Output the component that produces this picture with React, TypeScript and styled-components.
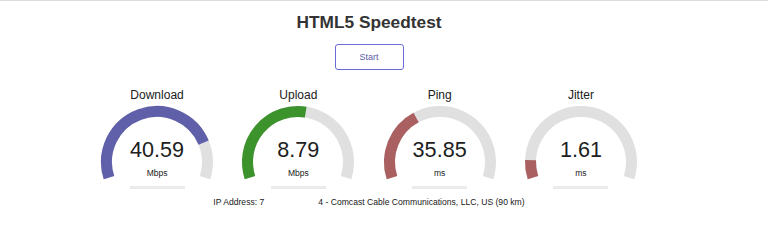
import React from "react";
import styled, { createGlobalStyle } from "styled-components";

const Global = createGlobalStyle`
  html, body { margin: 0; padding: 0; background: #fff; }
  body { font-family: "Liberation Sans", Arial, Helvetica, sans-serif; color: #202020; }
`;

const Frame = styled.div`
  border-top: 1px solid #dcdcdc;
  width: 768px;
  height: 231px;
  overflow: hidden;
`;

const Page = styled.main`
  width: 738px;
  display: flex;
  flex-direction: column;
  align-items: center;
`;

const Title = styled.h1`
  margin: 11px 0 0;
  font-size: 17.3px;
  line-height: 20px;
  font-weight: 700;
  color: #333;
`;

const StartButton = styled.button`
  margin-top: 12px;
  width: 69px;
  height: 26px;
  box-sizing: border-box;
  border: 1.4px solid #6a6ad8;
  border-radius: 3px;
  background: #fff;
  color: #6060aa;
  font-family: "Liberation Sans", Arial, sans-serif;
  font-size: 9px;
  padding: 0;
  cursor: pointer;
`;

const GaugeRow = styled.section`
  margin-top: 18px;
  display: grid;
  grid-template-columns: repeat(4, 141.3px);
`;

const Gauge = styled.div`
  display: flex;
  flex-direction: column;
  align-items: center;
`;

const Label = styled.div`
  font-size: 12px;
  line-height: 14px;
  color: #202020;
`;

const Meter = styled.div`
  position: relative;
  margin-top: 2px;
  width: 124px;
  height: 80px;
  display: flex;
  flex-direction: column;
  align-items: center;
`;

const Dial = styled.svg`
  position: absolute;
  inset: 0;
`;

const Value = styled.div`
  position: relative;
  margin-top: 34px;
  font-size: 21.6px;
  line-height: 24px;
  color: #202020;
`;

const Unit = styled.div`
  position: relative;
  margin-top: 6px;
  font-size: 8.5px;
  line-height: 10px;
  color: #202020;
`;

const Progress = styled.div`
  margin-top: 2px;
  width: 55px;
  height: 2.5px;
  background: #ebebeb;
`;

const IpLine = styled.p`
  margin: 7.5px 0 0;
  font-size: 8.6px;
  line-height: 12px;
  color: #202020;
  white-space: nowrap;
`;

const Redacted = styled.span`
  display: inline-block;
  width: 54px;
`;

const CX = 62;
const CY = 58;
const R = 50.5;
const SW = 11;
const START = -1.1 * Math.PI;

function pt(a: number) {
  return `${(CX + R * Math.cos(a)).toFixed(2)} ${(CY + R * Math.sin(a)).toFixed(2)}`;
}

function arcPath(amount: number) {
  const end = START + amount * 1.2 * Math.PI;
  const large = end - START > Math.PI ? 1 : 0;
  return `M ${pt(START)} A ${R} ${R} 0 ${large} 1 ${pt(end)}`;
}

const mbpsToAmount = (s: number) => 1 - 1 / Math.pow(1.3, Math.sqrt(s));
const msToAmount = (s: number) => 1 - 1 / Math.pow(1.08, Math.sqrt(s));

type G = { label: string; value: string; unit: string; color: string; amount: number };

const gauges: G[] = [
  { label: "Download", value: "40.59", unit: "Mbps", color: "#6060aa", amount: mbpsToAmount(40.59) },
  { label: "Upload", value: "8.79", unit: "Mbps", color: "#3d932b", amount: mbpsToAmount(8.79) },
  { label: "Ping", value: "35.85", unit: "ms", color: "#aa6060", amount: msToAmount(35.85) },
  { label: "Jitter", value: "1.61", unit: "ms", color: "#aa6060", amount: msToAmount(1.61) },
];

export default function App() {
  return (
    <>
      <Global />
      <Frame>
        <Page>
          <Title>HTML5 Speedtest</Title>
          <StartButton>Start</StartButton>
          <GaugeRow>
            {gauges.map((g) => (
              <Gauge key={g.label}>
                <Label>{g.label}</Label>
                <Meter>
                  <Dial width="124" height="80" viewBox="0 0 124 80">
                    <path d={arcPath(1)} fill="none" stroke="#e0e0e0" strokeWidth={SW} />
                    <path d={arcPath(g.amount)} fill="none" stroke={g.color} strokeWidth={SW} />
                  </Dial>
                  <Value>{g.value}</Value>
                  <Unit>{g.unit}</Unit>
                </Meter>
                <Progress />
              </Gauge>
            ))}
          </GaugeRow>
          <IpLine>
            IP Address: 7<Redacted />4 - Comcast Cable Communications, LLC, US (90 km)
          </IpLine>
        </Page>
      </Frame>
    </>
  );
}
